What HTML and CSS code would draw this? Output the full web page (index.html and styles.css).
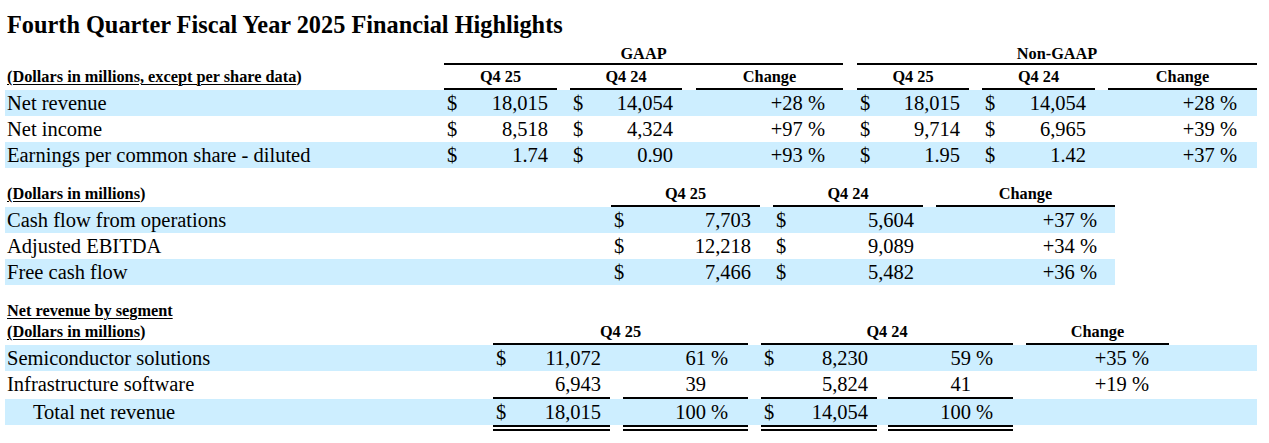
FILE: index.html
```html
<!DOCTYPE html>
<html lang="en">
<head>
<meta charset="utf-8">
<title>Fourth Quarter Fiscal Year 2025 Financial Highlights</title>
<link rel="stylesheet" href="styles.css">
</head>
<body>
<main class="page">
  <h1 class="title">Fourth Quarter Fiscal Year 2025 Financial Highlights</h1>

  <table class="fin t1">
    <colgroup>
      <col class="t1-lab"><col class="w113"><col class="w13"><col class="w112"><col class="w14"><col class="w147"><col class="w14"><col class="w112"><col class="w13"><col class="w113"><col class="w13"><col class="w149">
    </colgroup>
    <thead>
      <tr class="grp">
        <th></th><th colspan="5" class="ul">GAAP</th><th></th><th colspan="5" class="ul">Non-GAAP</th>
      </tr>
      <tr class="hdr">
        <th class="lbl"><u>(Dollars in millions, except per share data</u>)</th>
        <th class="ul">Q4 25</th><th></th><th class="ul">Q4 24</th><th></th><th class="ul">Change</th><th></th>
        <th class="ul">Q4 25</th><th></th><th class="ul">Q4 24</th><th></th><th class="ul">Change</th>
      </tr>
    </thead>
    <tbody>
      <tr class="hl">
        <td class="lbl">Net revenue</td>
        <td class="amt"><span class="cur">$</span>18,015</td><td></td>
        <td class="amt"><span class="cur">$</span>14,054</td><td></td>
        <td class="chg">+28 %</td><td></td>
        <td class="amt"><span class="cur">$</span>18,015</td><td></td>
        <td class="amt"><span class="cur">$</span>14,054</td><td></td>
        <td class="chg chg-r">+28 %</td>
      </tr>
      <tr>
        <td class="lbl">Net income</td>
        <td class="amt"><span class="cur">$</span>8,518</td><td></td>
        <td class="amt"><span class="cur">$</span>4,324</td><td></td>
        <td class="chg">+97 %</td><td></td>
        <td class="amt"><span class="cur">$</span>9,714</td><td></td>
        <td class="amt"><span class="cur">$</span>6,965</td><td></td>
        <td class="chg chg-r">+39 %</td>
      </tr>
      <tr class="hl">
        <td class="lbl">Earnings per common share - diluted</td>
        <td class="amt"><span class="cur">$</span>1.74</td><td></td>
        <td class="amt"><span class="cur">$</span>0.90</td><td></td>
        <td class="chg">+93 %</td><td></td>
        <td class="amt"><span class="cur">$</span>1.95</td><td></td>
        <td class="amt"><span class="cur">$</span>1.42</td><td></td>
        <td class="chg chg-r">+37 %</td>
      </tr>
    </tbody>
  </table>

  <table class="fin t2">
    <colgroup>
      <col class="t2-lab"><col class="w149"><col class="w13"><col class="w150"><col class="w13"><col class="w179">
    </colgroup>
    <thead>
      <tr class="hdr">
        <th class="lbl"><u>(Dollars in millions</u>)</th>
        <th class="ul">Q4 25</th><th></th><th class="ul">Q4 24</th><th></th><th class="ul">Change</th>
      </tr>
    </thead>
    <tbody>
      <tr class="hl">
        <td class="lbl">Cash flow from operations</td>
        <td class="amt"><span class="cur">$</span>7,703</td><td></td>
        <td class="amt"><span class="cur">$</span>5,604</td><td></td>
        <td class="chg">+37 %</td>
      </tr>
      <tr>
        <td class="lbl">Adjusted EBITDA</td>
        <td class="amt"><span class="cur">$</span>12,218</td><td></td>
        <td class="amt"><span class="cur">$</span>9,089</td><td></td>
        <td class="chg">+34 %</td>
      </tr>
      <tr class="hl">
        <td class="lbl">Free cash flow</td>
        <td class="amt"><span class="cur">$</span>7,466</td><td></td>
        <td class="amt"><span class="cur">$</span>5,482</td><td></td>
        <td class="chg">+36 %</td>
      </tr>
    </tbody>
  </table>

  <table class="fin t3">
    <colgroup>
      <col class="t3-lab"><col class="w117"><col class="w13"><col class="w125"><col class="w13"><col class="w116"><col class="w11"><col class="w125"><col class="w13"><col class="w143"><col class="w88">
    </colgroup>
    <thead>
      <tr class="sec">
        <th class="lbl" colspan="11"><u>Net revenue by segment</u></th>
      </tr>
      <tr class="hdr">
        <th class="lbl"><u>(Dollars in millions</u>)</th>
        <th colspan="3" class="ul">Q4 25</th><th></th>
        <th colspan="3" class="ul">Q4 24</th><th></th>
        <th class="ul">Change</th><th></th>
      </tr>
    </thead>
    <tbody>
      <tr class="hl">
        <td class="lbl">Semiconductor solutions</td>
        <td class="amt"><span class="cur">$</span>11,072</td><td></td>
        <td class="pct">61<span class="pc">%</span></td><td></td>
        <td class="amt"><span class="cur">$</span>8,230</td><td></td>
        <td class="pct">59<span class="pc">%</span></td><td></td>
        <td class="chg chg-r">+35 %</td><td></td>
      </tr>
      <tr class="sub">
        <td class="lbl">Infrastructure software</td>
        <td class="amt ul">6,943</td><td></td>
        <td class="pct ul">39<span class="pc"></span></td><td></td>
        <td class="amt ul">5,824</td><td></td>
        <td class="pct ul">41<span class="pc"></span></td><td></td>
        <td class="chg chg-r">+19 %</td><td></td>
      </tr>
      <tr class="hl">
        <td class="lbl total">Total net revenue</td>
        <td class="amt"><span class="cur">$</span>18,015</td><td></td>
        <td class="pct">100<span class="pc">%</span></td><td></td>
        <td class="amt"><span class="cur">$</span>14,054</td><td></td>
        <td class="pct">100<span class="pc">%</span></td><td></td>
        <td></td><td></td>
      </tr>
      <tr class="dbl">
        <td></td><td class="dl"></td><td></td><td class="dl"></td><td></td><td class="dl"></td><td></td><td class="dl"></td><td></td><td></td><td></td>
      </tr>
    </tbody>
  </table>
</main>
</body>
</html>
```

FILE: styles.css
```css
* { box-sizing: border-box; }

body {
  margin: 0;
  background: #ffffff;
  color: #000000;
  font-family: "Liberation Serif", "Times New Roman", serif;
}

.page {
  padding: 11px 0 0 5px;
}

.title {
  margin: 0 0 5px 2px;
  font-size: 24.3px;
  line-height: 28px;
  font-weight: bold;
}

/* tables */
.fin {
  border-collapse: separate;
  border-spacing: 0;
  table-layout: fixed;
  font-size: 20.5px;
}

.fin th,
.fin td {
  padding: 0;
  vertical-align: top;
  white-space: nowrap;
}

.t1 { width: 1252px; }
.t2 { width: 1110px; margin-top: 14px; }
.t3 { width: 1252px; margin-top: 16px; }

.t1-lab { width: 439px; }
.t2-lab { width: 606px; }
.t3-lab { width: 488px; }
.w11 { width: 11px; }
.w13 { width: 13px; }
.w14 { width: 14px; }
.w88 { width: 88px; }
.w112 { width: 112px; }
.w113 { width: 113px; }
.w116 { width: 116px; }
.w117 { width: 117px; }
.w125 { width: 125px; }
.w143 { width: 143px; }
.w147 { width: 147px; }
.w149 { width: 149px; }
.w150 { width: 150px; }
.w179 { width: 179px; }

/* header rows */
.fin th {
  font-size: 16.3px;
  font-weight: bold;
  line-height: 19px;
  text-align: center;
}

.fin .grp th { padding: 0; }
.fin .hdr th { padding: 2px 0; }
.fin .sec th { padding: 0; }

.fin th.lbl {
  text-align: left;
  padding-left: 2px;
}

.fin u {
  text-decoration: underline;
  text-decoration-thickness: 1px;
  text-underline-offset: 2px;
}

.fin .ul { border-bottom: 2px solid #000000; }

/* body rows */
.fin td {
  line-height: 26px;
  height: 26px;
}

.fin .hl td { background: #cdeeff; }

.fin td.lbl { padding-left: 2px; }
.fin td.total { padding-left: 28px; }

.fin td.amt {
  text-align: right;
  padding: 0 9px 0 3px;
}

.cur { float: left; }

.fin td.chg {
  text-align: right;
  padding-right: 18px;
}

.fin td.chg-r { padding-right: 20px; }

.fin td.pct {
  text-align: right;
  padding-right: 20px;
}

.pc {
  display: inline-block;
  width: 22px;
  text-align: right;
}

/* double underline under totals */
.fin .dbl td {
  height: 6px;
  line-height: 0;
  font-size: 0;
  background: transparent;
}

.fin .dbl td.dl {
  border-top: 2px solid #000000;
  border-bottom: 2px solid #000000;
}
```
